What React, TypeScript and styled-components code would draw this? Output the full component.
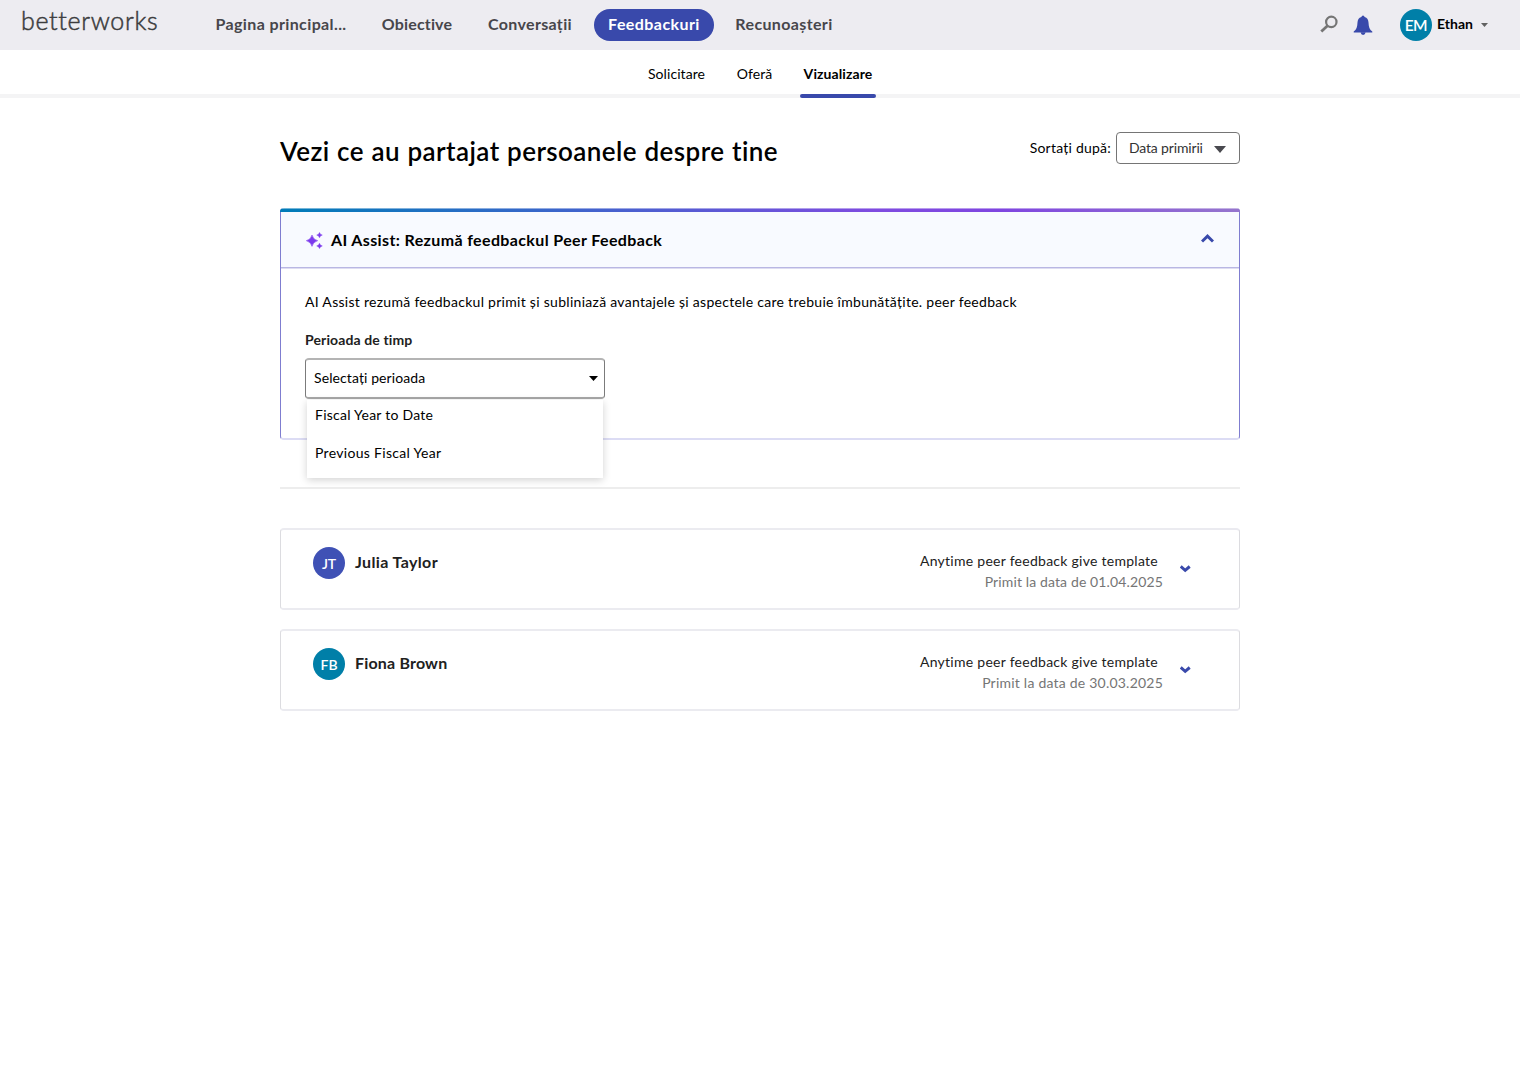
import React from "react";
import styled, { createGlobalStyle, css } from "styled-components";

const GlobalStyle = createGlobalStyle`
  * { box-sizing: border-box; }
  html, body { margin: 0; padding: 0; background: #fff; }
  body { font-family: Lato, "Open Sans", sans-serif; color: #000; }
  button { font: inherit; color: inherit; background: none; border: 0; padding: 0; letter-spacing: inherit; }
`;

type Tracked = { $track?: number };
const track = css<Tracked>`letter-spacing: ${(p) => p.$track ?? 0}px; white-space: nowrap;`;

const TopBar = styled.header`
  display: flex; align-items: center; height: 50px; padding: 0 32px 0 21px; background: #edecf1;
`;
const Logo = styled.a<Tracked>`
  width: 181px; margin-top: -10px; font-size: 25px; line-height: 30px; font-weight: 300; color: #3c3c3e;
  -webkit-text-stroke: 0.5px #3c3c3e; ${track}
`;
const MainNav = styled.nav`display: flex; align-items: center; gap: 8px;`;
const NavItem = styled.a<Tracked & { $active?: boolean; $w: number }>`
  display: flex; align-items: center; justify-content: center; width: ${(p) => p.$w}px; height: 32px; padding-bottom: 2px; border-radius: 16px;
  font-size: 16px; font-weight: 700; line-height: 20px;
  color: ${(p) => (p.$active ? "#fff" : "#47464b")};
  background: ${(p) => (p.$active ? "#3949ab" : "transparent")};
  ${track}
`;
const Tools = styled.div`display: flex; align-items: center; margin-left: auto;`;
const SearchIcon = styled.svg`margin: -2px 15px 0 0;`;
const BellIcon = styled.svg`margin: 0 27px 0 0;`;
const Avatar = styled.span<Tracked & { $bg: string; $size: number }>`
  display: flex; align-items: center; justify-content: center; width: 32px; height: 32px; border-radius: 50%;
  background: ${(p) => p.$bg}; color: #fff; font-size: ${(p) => p.$size}px; font-weight: 600; ${track}
`;
const UserName = styled.span<Tracked>`margin: -2px 8px 0 5px; font-size: 14px; font-weight: 700; line-height: 18px; ${track}`;

const SubNav = styled.nav`
  display: flex; height: 48px; padding-left: 644px; gap: 24px; border-bottom: 4px solid #f4f4f5;
`;
const SubItem = styled.a<Tracked & { $active?: boolean; $w: number }>`
  display: flex; flex-direction: column; align-items: center; justify-content: space-between;
  width: ${(p) => p.$w}px; height: 48px; padding-top: 15px;
  font-size: 14px; line-height: 18px; font-weight: ${(p) => (p.$active ? 700 : 400)};
  ${track}
  &::after { content: ""; width: 100%; height: 4px; border-radius: 2px; background: ${(p) => (p.$active ? "#3949ab" : "transparent")}; }
`;

const Page = styled.main`width: 960px; margin: 0 auto;`;
const TitleRow = styled.div`display: flex; justify-content: space-between; height: 110px; padding-top: 34px;`;
const Title = styled.h1<Tracked>`margin: 3px 0 0; font-size: 26px; line-height: 32px; font-weight: 600; word-spacing: 0.6px; ${track}`;
const Sort = styled.div`display: flex; align-items: flex-start;`;
const SortLabel = styled.span<Tracked>`margin: 7px 5px 0 0; font-size: 14px; line-height: 18px; ${track}`;
const SortBox = styled.button<Tracked>`
  display: flex; align-items: center; justify-content: space-between; width: 124px; height: 32px; padding: 0 13px 0 12px;
  border: 1px solid #757575; border-radius: 4px; font-size: 14px; line-height: 18px; color: #333; ${track}
  svg { margin-top: 2px; }
`;

const Assist = styled.section`
  height: 232px; border: 1px solid #7f7dd0; border-top: 0; border-bottom: 2px solid #dcdcf4; border-radius: 4px;
`;
const AssistBar = styled.div`
  height: 4px; margin: 0 -1px; border-radius: 4px 4px 0 0;
  background: linear-gradient(rgba(255,255,255,.45) 1px, transparent 1px), linear-gradient(90deg, #007cb8, #7f4be0 62%, #7f45e0 75%, #9575cd);
`;
const AssistHead = styled.div`
  display: flex; align-items: center; height: 56px; padding: 1px 25px 0; background: #f8faff;
  border-bottom: 1px solid #b9b7e3;
`;
const HeadShade = styled.div`height: 1px; background: #dedcf2;`;
const AssistTitle = styled.h2<Tracked>`margin: 0 auto 0 8px; font-size: 16px; line-height: 20px; font-weight: 700; ${track}`;
const AssistChevron = styled.svg`margin-top: -4px;`;
const AssistBody = styled.div`padding: 23px 24px; font-size: 14px; line-height: 20px;`;
const Copy = styled.p<Tracked>`margin: 0; ${track}`;
const FieldLabel = styled.label<Tracked>`display: block; width: max-content; margin: 18px 0 8px; font-weight: 700; color: #212121; ${track}`;
const Field = styled.div`position: relative; width: 300px;`;
const Select = styled.button<Tracked>`
  display: flex; align-items: center; justify-content: space-between; width: 300px; height: 41px; padding: 0 6px 1px 8px;
  border: 1px solid #7b7b7b; border-top: 2px solid #b4b4b4; border-bottom: 2px solid #a8a8a8; border-radius: 4px; ${track}
`;
const Menu = styled.div`
  position: absolute; top: 42px; left: 2px; width: 296px; height: 78px; background: #fff; box-shadow: 0 2px 8px rgba(0,0,0,.18);
`;
const MenuItem = styled.div<Tracked>`height: 38px; padding: 5px 8px; ${track}`;
const Divider = styled.hr`height: 2px; margin: 47px 0 39px; border: 0; background: #ededed;`;

const Card = styled.article`
  display: flex; height: 82px; margin-bottom: 19px; padding: 17.4px 48px 0 32px; border: 2px solid #ebebf0;
  border-left: 1px solid #dcdce0; border-right: 1px solid #dcdce0; border-radius: 4px;
`;
const Person = styled.span<Tracked>`margin: 4.6px auto 0 10px; font-size: 16px; line-height: 20px; font-weight: 700; color: #212121; ${track}`;
const Meta = styled.div`display: flex; flex-direction: column; align-items: flex-end; margin: -1.4px 17px 0 0; font-size: 14px; line-height: 21px;`;
const Template = styled.span<Tracked>`margin: 4px 5px 0 0; color: #212121; ${track}`;
const Received = styled.span<Tracked>`color: #757575; ${track}`;
const CardChevron = styled.span`display: flex; margin-top: 17.6px;`;

const people = [
  { initials: "JT", name: "Julia Taylor", bg: "#3f51b5", date: "01.04.2025", nameTrack: 0.37, dateTrack: 0.13 },
  { initials: "FB", name: "Fiona Brown", bg: "#007fa8", date: "30.03.2025", nameTrack: 0.18, dateTrack: 0.22 },
];

const Caret = ({ w, h, color }: { w: number; h: number; color: string }) => (
  <svg width={w} height={h} viewBox={`0 0 ${w} ${h}`}><path d={`M0 0H${w}L${w / 2} ${h}Z`} fill={color} /></svg>
);

export default function App() {
  return (
    <>
      <GlobalStyle />
      <TopBar>
        <Logo $track={0.66}>betterworks</Logo>
        <MainNav>
          <NavItem $w={158} $track={0.377}>Pagina principal...</NavItem>
          <NavItem $w={98} $track={0.15}>Obiective</NavItem>
          <NavItem $w={112} $track={0.33}>Conversații</NavItem>
          <NavItem $w={120} $active $track={0.43}>Feedbackuri</NavItem>
          <NavItem $w={124} $track={0.37}>Recunoașteri</NavItem>
        </MainNav>
        <Tools>
          <SearchIcon width="18" height="18" viewBox="0 0 18 18" fill="none" stroke="#757575"><circle cx="11.3" cy="6.9" r="5.2" strokeWidth="2.200" /><path d="M7.5 10.800L1.3 16.600" strokeWidth="2.800" /></SearchIcon>
          <BellIcon width="20" height="20" viewBox="0 0 20 20" fill="#3949ab">
            <path d="M10 .5Q11.300.7 11.600 1.900C14.300 2.800 15.400 4.700 15.500 7.500C15.700 12 16.500 14.800 19.300 16.600V17.400H.7V16.600C3.500 14.800 4.300 12 4.500 7.500C4.600 4.700 5.700 2.800 8.400 1.900Q8.700.7 10 .5Z" />
            <path d="M7.600 17.300H12.600Q12.200 19.900 10.100 19.900Q8 19.900 7.600 17.300Z" />
          </BellIcon>
          <Avatar $bg="#007fa8" $size={15.5} $track={-0.5}>EM</Avatar>
          <UserName $track={0.05}>Ethan</UserName>
          <Caret w={7} h={4} color="#616161" />
        </Tools>
      </TopBar>
      <SubNav>
        <SubItem $w={65} $track={0.07}>Solicitare</SubItem>
        <SubItem $w={43} $track={0.05}>Oferă</SubItem>
        <SubItem $w={76} $active $track={0.09}>Vizualizare</SubItem>
      </SubNav>
      <Page>
        <TitleRow>
          <Title $track={0.42}>Vezi ce au partajat persoanele despre tine</Title>
          <Sort>
            <SortLabel $track={0.23}>Sortați după:</SortLabel>
            <SortBox $track={-0.16}>Data primirii<Caret w={12} h={7} color="#4a4a4f" /></SortBox>
          </Sort>
        </TitleRow>
        <Assist>
          <AssistBar />
          <AssistHead>
            <svg width="17" height="17" viewBox="0 0 17 17" fill="#7c3aed" stroke="#7c3aed">
              <path d="M6 3Q7.200 7.600 11.700 8.700Q7.200 9.800 6 14.400Q4.800 9.800 .3 8.700Q4.800 7.600 6 3Z" strokeWidth=".5" />
              <path d="M13.500 .4Q14 2.600 16.300 3.100Q14 3.600 13.500 5.800Q13 3.600 10.700 3.100Q13 2.600 13.500 .4Z" strokeWidth=".4" />
              <path d="M13.500 11.200Q14 13.400 16.300 13.900Q14 14.400 13.500 16.600Q13 14.400 10.700 13.900Q13 13.400 13.500 11.200Z" strokeWidth=".4" />
            </svg>
            <AssistTitle $track={0.37}>AI Assist: Rezumă feedbackul Peer Feedback</AssistTitle>
            <AssistChevron width="13" height="9" viewBox="0 0 13 9" fill="none" stroke="#3949ab" strokeWidth="3"><path d="M1 7.500L6.500 2.200L12 7.500" /></AssistChevron>
          </AssistHead>
          <HeadShade />
          <AssistBody>
            <Copy $track={0.285}>AI Assist rezumă feedbackul primit și subliniază avantajele și aspectele care trebuie îmbunătățite. peer feedback</Copy>
            <FieldLabel $track={0.12}>Perioada de timp</FieldLabel>
            <Field>
              <Select $track={0.1}>Selectați perioada<Caret w={9} h={5} color="#000" /></Select>
              <Menu>
                <MenuItem $track={0.25}>Fiscal Year to Date</MenuItem>
                <MenuItem $track={0.31}>Previous Fiscal Year</MenuItem>
              </Menu>
            </Field>
          </AssistBody>
        </Assist>
        <Divider />
        {people.map((p) => (
          <Card key={p.initials}>
            <Avatar $bg={p.bg} $size={14} $track={-0.1}>{p.initials}</Avatar>
            <Person $track={p.nameTrack}>{p.name}</Person>
            <Meta>
              <Template $track={0.27}>Anytime peer feedback give template</Template>
              <Received $track={p.dateTrack}>{`Primit la data de ${p.date}`}</Received>
            </Meta>
            <CardChevron>
              <svg width="11" height="8" viewBox="0 0 11 8" fill="none" stroke="#3949ab" strokeWidth="3"><path d="M.7 1.500L5.200 5.300L9.700 1.500" /></svg>
            </CardChevron>
          </Card>
        ))}
      </Page>
    </>
  );
}
